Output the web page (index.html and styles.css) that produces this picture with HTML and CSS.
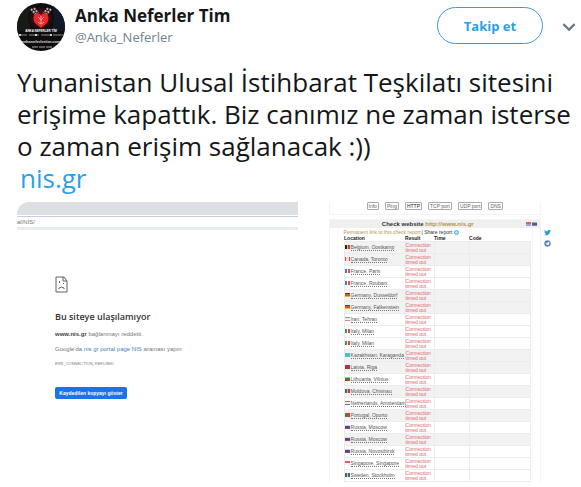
FILE: index.html
```html
<!DOCTYPE html>
<html lang="tr">
<head>
  <meta charset="UTF-8">
  <meta name="viewport" content="width=device-width, initial-scale=1.0">
  <title>Anka Neferler Tim</title>
  <link rel="stylesheet" href="styles.css">
</head>
<body>
  <article class="tweet">
    <header class="tweet-header">
      <svg class="avatar" viewBox="0 0 48 48" role="img" aria-label="Anka Neferler Tim">
        <defs>
          <clipPath id="round"><circle cx="24" cy="24" r="24"/></clipPath>
          <radialGradient id="glow"><stop offset="0" stop-color="#7d1418"/><stop offset="1" stop-color="#0e0c0d"/></radialGradient>
        </defs>
        <g clip-path="url(#round)">
          <rect width="48" height="48" fill="#0e0c0d"/>
          <path d="M0 0h13v28H0z" fill="#171b16"/>
          <path d="M36 0h12v28H36z" fill="#121926"/>
          <ellipse cx="24" cy="15" rx="13" ry="12" fill="url(#glow)"/>
          <path d="M14 6l8 9M34 6l-8 9M17 5l4 5M31 5l-4 5" stroke="#b9b2b0" stroke-width="2" stroke-dasharray="2 1"/>
          <path d="M18 11q3-2 6 1q3-3 6-1q3 4 0 9l-6 5l-6-5q-3-5 0-9z" fill="#e8282d"/>
          <path d="M21 14l3 3l3-3M24 13v8M21 19l3 2l3-2" fill="none" stroke="#ff9c94"/>
          <path d="M0 32h48" stroke="#8b8b8b" stroke-dasharray="10 2"/>
          <g fill="#fff"><circle cx="3" cy="32" r="1"/><circle cx="19" cy="32" r="1"/><circle cx="34" cy="32" r="1"/></g>
          <text class="avatar-name" x="24" y="29" text-anchor="middle">ANKA NEFERLER TİM</text>
          <text class="avatar-site" x="24" y="40" text-anchor="middle">ankaneferlertim.com</text>
          <path d="M15 44h20" stroke="#aaa" stroke-dasharray="6 1"/>
        </g>
      </svg>
      <div class="author">
        <div class="author-name">Anka Neferler Tim</div>
        <div class="author-handle">@Anka_Neferler</div>
      </div>
      <button class="follow-btn" type="button">Takip et</button>
      <button class="more-btn" type="button" aria-label="Diğer">
        <svg viewBox="0 0 12 8"><path d="M1 1l5 5l5-5" fill="none" stroke="#657786" stroke-width="2"/></svg>
      </button>
    </header>

    <p class="tweet-text">Yunanistan Ulusal İstihbarat Teşkilatı sitesini<br>erişime kapattık. Biz canımız ne zaman isterse<br>o zaman erişim sağlanacak :))<br><a class="tweet-link" href="#">nis.gr</a></p>

    <div class="media">
      <section class="browser">
        <div class="tab-bar"></div>
        <div class="address">al/NIS/</div>
        <div class="error-page">
          <svg class="sad-page" viewBox="0 0 13 17">
            <path d="M1 1h8l3 4v11H1z" fill="none" stroke="#5f6368" stroke-width="1"/>
            <path d="M8 1v4h4" fill="none" stroke="#5f6368" stroke-width="1"/>
            <path d="M4 5h1v2H4zM8 7h1v1H8z" fill="#5f6368"/>
            <path d="M4 13v-1q3-2 5 0v1" fill="none" stroke="#5f6368"/>
          </svg>
          <h2>Bu siteye ulaşılamıyor</h2>
          <p><b>www.nis.gr</b> bağlanmayı reddetti.</p>
          <p>Google'da <a href="#">nis gr portal page NIS</a> araması yapın</p>
          <p class="error-code">ERR_CONNECTION_REFUSED</p>
          <button class="saved-btn" type="button">Kaydedilen kopyayı göster</button>
        </div>
      </section>

      <section class="checker">
        <div class="checker-main">
          <nav class="checks">
            <button type="button">Info</button>
            <button type="button">Ping</button>
            <button type="button" class="active">HTTP</button>
            <button type="button">TCP port</button>
            <button type="button">UDP port</button>
            <button type="button">DNS</button>
          </nav>
          <div class="report">
            <div class="report-title">
              <span class="report-name">Check website <a href="#">http://www.nis.gr</a></span>
              <i class="flag lang-en"></i><i class="flag lang-ru"></i>
            </div>
            <div class="report-body">
              <div class="share"><a href="#">Permanent link to this check report</a> | Share report: <i class="share-dot"></i></div>
              <table class="results">
                <thead>
                  <tr><th class="col-location">Location</th><th class="col-result">Result</th><th class="col-time">Time</th><th>Code</th></tr>
                </thead>
                <tbody>
                  <tr class="shade"><td><i class="flag be"></i><a href="#">Belgium, Oostkamp</a></td><td class="fail">Connection<br>timed out</td><td></td><td></td></tr>
                  <tr class="shade"><td><i class="flag ca"></i><a href="#">Canada, Toronto</a></td><td class="fail">Connection<br>timed out</td><td></td><td></td></tr>
                  <tr><td><i class="flag fr"></i><a href="#">France, Paris</a></td><td class="fail">Connection<br>timed out</td><td></td><td></td></tr>
                  <tr><td><i class="flag fr"></i><a href="#">France, Roubaix</a></td><td class="fail">Connection<br>timed out</td><td></td><td></td></tr>
                  <tr class="shade"><td><i class="flag de"></i><a href="#">Germany, Dusseldorf</a></td><td class="fail">Connection<br>timed out</td><td></td><td></td></tr>
                  <tr class="shade"><td><i class="flag de"></i><a href="#">Germany, Falkenstein</a></td><td class="fail">Connection<br>timed out</td><td></td><td></td></tr>
                  <tr><td><i class="flag ir"></i><a href="#">Iran, Tehran</a></td><td class="fail">Connection<br>timed out</td><td></td><td></td></tr>
                  <tr><td><i class="flag it"></i><a href="#">Italy, Milan</a></td><td class="fail">Connection<br>timed out</td><td></td><td></td></tr>
                  <tr><td><i class="flag it"></i><a href="#">Italy, Milan</a></td><td class="fail">Connection<br>timed out</td><td></td><td></td></tr>
                  <tr class="shade"><td><i class="flag kz"></i><a href="#">Kazakhstan, Karaganda</a></td><td class="fail">Connection<br>timed out</td><td></td><td></td></tr>
                  <tr class="shade"><td><i class="flag lv"></i><a href="#">Latvia, Riga</a></td><td class="fail">Connection<br>timed out</td><td></td><td></td></tr>
                  <tr><td><i class="flag lt"></i><a href="#">Lithuania, Vilnius</a></td><td class="fail">Connection<br>timed out</td><td></td><td></td></tr>
                  <tr class="shade"><td><i class="flag md"></i><a href="#">Moldova, Chisinau</a></td><td class="fail">Connection<br>timed out</td><td></td><td></td></tr>
                  <tr><td><i class="flag nl"></i><a href="#">Netherlands, Amsterdam</a></td><td class="fail">Connection<br>timed out</td><td></td><td></td></tr>
                  <tr class="shade"><td><i class="flag pt"></i><a href="#">Portugal, Oporto</a></td><td class="fail">Connection<br>timed out</td><td></td><td></td></tr>
                  <tr><td><i class="flag ru"></i><a href="#">Russia, Moscow</a></td><td class="fail">Connection<br>timed out</td><td></td><td></td></tr>
                  <tr class="shade"><td><i class="flag ru"></i><a href="#">Russia, Moscow</a></td><td class="fail">Connection<br>timed out</td><td></td><td></td></tr>
                  <tr><td><i class="flag ru"></i><a href="#">Russia, Novosibirsk</a></td><td class="fail">Connection<br>timed out</td><td></td><td></td></tr>
                  <tr><td><i class="flag sg"></i><a href="#">Singapore, Singapore</a></td><td class="fail">Connection<br>timed out</td><td></td><td></td></tr>
                  <tr><td><i class="flag se"></i><a href="#">Sweden, Stockholm</a></td><td class="fail">Connection<br>timed out</td><td></td><td></td></tr>
                </tbody>
              </table>
            </div>
          </div>
        </div>
        <div class="social">
          <a href="#" aria-label="Twitter"><svg viewBox="0 0 24 24"><path fill="#2b9bd0" d="M23.6 4.9c-.8.4-1.700.6-2.700.8 1-.6 1.700-1.500 2.100-2.600-.9.500-1.900.9-3 1.100a4.700 4.700 0 0 0-8.100 4.300C8 8.300 4.500 6.400 2.200 3.600c-1.200 2.100-.6 4.900 1.500 6.300-.8 0-1.500-.2-2.100-.6 0 2.200 1.500 4.200 3.700 4.700-.7.200-1.400.2-2.100.1.600 1.900 2.300 3.200 4.400 3.300A9.500 9.500 0 0 1 .6 19.300 13.400 13.400 0 0 0 21.200 7.400c1-.7 1.800-1.500 2.400-2.500z"/></svg></a>
          <a href="#" aria-label="Telegram"><svg viewBox="0 0 24 24"><circle cx="12" cy="12" r="11" fill="#5a84c4"/><path fill="#fff" d="M4 12l15-6-3 13-5-4-2 2-1-4 7-5-9 5z"/></svg></a>
        </div>
      </section>
    </div>
  </article>
</body>
</html>
```
FILE: styles.css
```css
* { box-sizing: border-box; }
body { margin: 0; background: #fff; color: #14171a; font-family: "Open Sans", "Noto Sans", sans-serif; }
a { text-decoration: none; }
button { font-family: inherit; cursor: pointer; }
.tweet { padding: 3px 0 5px 17px; }

.tweet-header { display: flex; align-items: flex-start; padding-right: 5px; height: 60px; }
.avatar { width: 48px; height: 48px; flex: none; margin-right: 10px; }
.avatar-name { font: bold 3px "Liberation Sans", sans-serif; fill: #fff; }
.avatar-site { font: bold 4px "Liberation Sans", sans-serif; fill: #ddd; }
.author { flex: 1; padding-top: 1px; }
.author-name { font-size: 17px; line-height: 24px; font-weight: 700; }
.author-handle { font-size: 13px; line-height: 18px; color: #728290; }
.follow-btn { width: 106px; height: 37px; margin-top: 4px; border: 1px solid #3a9ad9; border-radius: 19px; background: #fff; color: #2b9fe6; font-size: 13px; font-weight: 700; }
.more-btn { width: 14px; height: 10px; margin: 19px 0 0 19px; padding: 0; border: 0; background: none; }
.more-btn svg { display: block; width: 14px; height: 9px; }

.tweet-text { margin: 3px 0 0; font-size: 26px; line-height: 32px; white-space: nowrap; }
.tweet-link { margin-left: 3px; color: #2b9fe6; }

.media { display: grid; grid-template-columns: 5fr 4fr; gap: 31px; padding-right: 28px; margin-top: 8px; }

.browser { color: #777; font-family: "Liberation Sans", Arial, sans-serif; font-size: 6px; }
.tab-bar { height: 13px; background: #dce0e5; border-top-left-radius: 12px; }
.address { height: 14px; margin-top: 1px; border-top: 1px solid #c3cede; border-bottom: 3px solid #e9ecef; line-height: 11px; }
.error-page { padding: 46px 0 0 38px; }
.sad-page { display: block; width: 13px; height: 17px; }
.browser h2 { margin: 16px 0 4px; font-family: "Open Sans", "Noto Sans", sans-serif; font-size: 9px; line-height: 16px; font-weight: 600; color: #333; }
.browser p { margin: 0 0 5px; line-height: 10px; }
.browser b { color: #444; }
.browser p a { color: #4a7fc4; }
.browser .error-code { font-size: 4px; }
.saved-btn { display: block; width: 72px; height: 12px; margin-top: 18px; padding: 0; border: 0; border-radius: 2px; background: #1a73e8; color: #fff; font-size: 5px; font-weight: 700; line-height: 12px; }

.checker { display: flex; gap: 2px; font-family: "Liberation Sans", Arial, sans-serif; font-size: 5px; color: #333; }
.checker-main { flex: 1; }
.checks { display: flex; gap: 6px; justify-content: center; height: 13px; border: 1px solid #f4f4f4; border-top: 0; }
.checks button { height: 8px; padding: 0 1px; border: 1px solid #aaa; border-radius: 1px; background: #fff; color: #666; font-size: 5px; line-height: 6px; }
.checks .active { color: #222; }
.report { margin-top: 4px; border: 1px solid #f4f4f4; border-bottom: 0; }
.report-title { display: flex; align-items: center; height: 8px; padding-right: 2px; background: #efefef; font-size: 6px; font-weight: 700; line-height: 8px; }
.report-name { flex: 1; text-align: center; }
.report a { color: #555; }
.report-title a, .share a { color: #b5954a; }
.report-body { margin: 0 7px; padding: 0 1px 0 6px; border: solid #f8f8f8; border-width: 0 1px; }
.share { display: flex; align-items: center; gap: 1px; height: 8px; white-space: nowrap; }
.share-dot { width: 5px; height: 5px; border: 1px solid #48b3dd; border-radius: 50%; background: #b9e3f2; }

.results { width: 100%; height: 246px; table-layout: fixed; border-collapse: collapse; }
.results th { height: 5px; padding: 0; text-align: left; line-height: 5px; color: #222; }
.results td { padding: 0; border: 1px solid #ececec; line-height: 5px; white-space: nowrap; }
.col-location { width: 61px; }
.col-result { width: 29px; }
.col-time { width: 35px; }
.shade { background: #f2f2f2; }
.results .fail { color: #e0686c; }
.results td a { border-bottom: 1px dotted #777; }

.flag { display: inline-block; width: 5px; height: 4px; margin-right: 1px; }
.lang-en { background: linear-gradient(#c66 50%, #a8a0c4 50%); }
.lang-ru { background: linear-gradient(#aab 33%, #3b62ac 33% 66%, #a77 66%); }
.be { background: linear-gradient(90deg, #222 33%, #f3d02c 33% 66%, #d33 66%); }
.ca { background: linear-gradient(90deg, #d44 25%, #fbd5d5 25% 75%, #d44 75%); }
.fr { background: linear-gradient(90deg, #5f77b8 33%, #eee 33% 66%, #d55 66%); }
.de { background: linear-gradient(#543 33%, #d53 33% 66%, #e9b53b 66%); }
.ir { background: linear-gradient(#7cb37c 33%, #eee 33% 66%, #d88 66%); }
.it { background: linear-gradient(90deg, #3a9a52 33%, #eee 33% 66%, #d44 66%); }
.kz { background: #45c3cc; }
.lv { background: linear-gradient(#a33a46 40%, #eee 40% 60%, #a33a46 60%); }
.lt { background: linear-gradient(#e0bd2c 33%, #3c8046 33% 66%, #b93a3a 66%); }
.md { background: linear-gradient(90deg, #3f62ad 33%, #e8c33c 33% 66%, #c43c3c 66%); }
.nl { background: linear-gradient(#c66 33%, #eee 33% 66%, #5a74b5 66%); }
.pt { background: linear-gradient(90deg, #3d8a3d 40%, #d53c2c 40%); }
.ru { background: linear-gradient(#ddd 25%, #4444b0 25% 66%, #b8405c 66%); }
.sg { background: linear-gradient(#dd5a5a 50%, #f4eeee 50%); }
.se { background: linear-gradient(90deg, #3c6aa5 30%, #e3ca3c 30% 50%, #3c6aa5 50%); }

.social { display: flex; flex-direction: column; gap: 4px; width: 10px; padding-top: 27px; align-items: center; }
.social svg { display: block; width: 7px; height: 7px; }
```
